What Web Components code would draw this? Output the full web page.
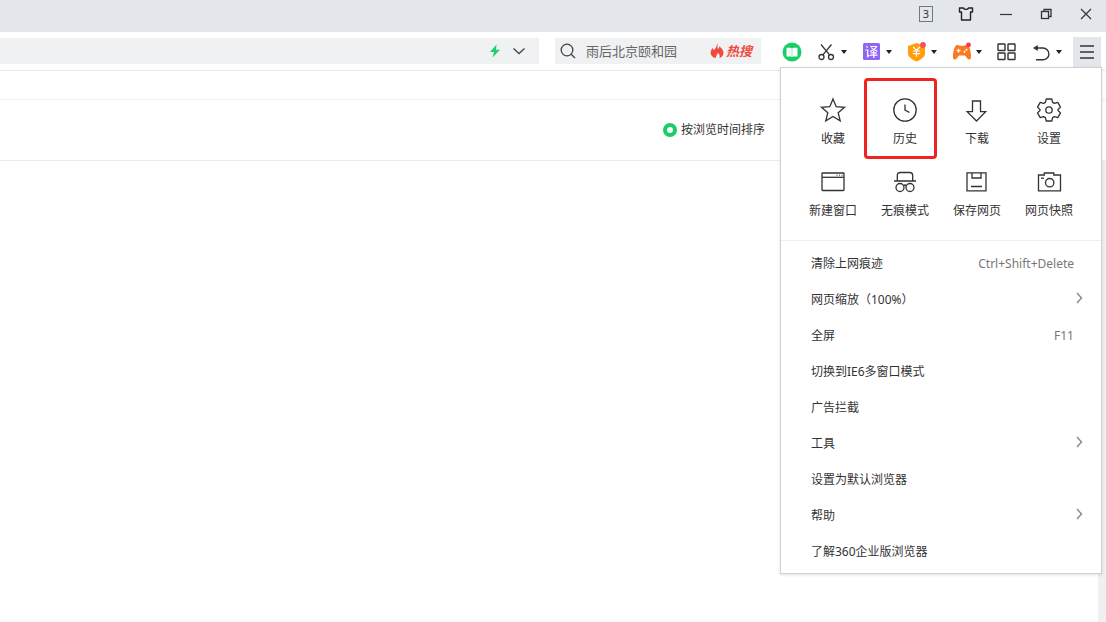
<!DOCTYPE html>
<html lang="zh-CN">
<head>
<meta charset="utf-8">
<meta name="viewport" content="width=device-width, initial-scale=1">
<title>历史记录</title>
<style>
  html, body { margin: 0; min-height: 100%; }
  body {
    font: 12px/16px "Noto Sans", "Noto Sans CJK SC", sans-serif;
    color: #333;
    background: #fff;
  }
</style>
</head>
<body>
<browser-window>
  <title-bar slot="title"></title-bar>
  <tool-bar slot="toolbar">
    <address-field slot="address"></address-field>
    <search-field slot="search" hint="雨后北京颐和园">热搜</search-field>
    <tool-button icon="book" label="阅读"></tool-button>
    <tool-button icon="scissors" label="截图" menu></tool-button>
    <tool-button icon="translate" label="翻译" menu></tool-button>
    <tool-button icon="wallet" label="钱包" menu></tool-button>
    <tool-button icon="game" label="游戏" menu></tool-button>
    <tool-button icon="grid" label="扩展"></tool-button>
    <tool-button icon="undo" label="撤销" menu></tool-button>
    <main-menu slot="menu">
      <menu-tile slot="tiles" icon="star">收藏</menu-tile>
      <menu-tile slot="tiles" icon="clock" marked>历史</menu-tile>
      <menu-tile slot="tiles" icon="download">下载</menu-tile>
      <menu-tile slot="tiles" icon="gear">设置</menu-tile>
      <menu-tile slot="tiles" icon="window">新建窗口</menu-tile>
      <menu-tile slot="tiles" icon="incognito">无痕模式</menu-tile>
      <menu-tile slot="tiles" icon="save">保存网页</menu-tile>
      <menu-tile slot="tiles" icon="camera">网页快照</menu-tile>
      <menu-row>清除上网痕迹<span slot="keys">Ctrl+Shift+Delete</span></menu-row>
      <menu-row submenu>网页缩放（100%）</menu-row>
      <menu-row>全屏<span slot="keys">F11</span></menu-row>
      <menu-row>切换到IE6多窗口模式</menu-row>
      <menu-row>广告拦截</menu-row>
      <menu-row submenu>工具</menu-row>
      <menu-row>设置为默认浏览器</menu-row>
      <menu-row submenu>帮助</menu-row>
      <menu-row>了解360企业版浏览器</menu-row>
    </main-menu>
  </tool-bar>
  <history-page>按浏览时间排序</history-page>
</browser-window>

<script>
const RESET = `
  :host, * { box-sizing: border-box; }
  button { margin: 0; padding: 0; border: 0; background: none; font: inherit; color: inherit; cursor: pointer; }
  input { margin: 0; padding: 0; border: 0; background: none; font: inherit; color: inherit; outline: none; }
`;

function define(name, render) {
  customElements.define(name, class extends HTMLElement {
    connectedCallback() {
      if (this.shadowRoot) return;
      const t = document.createElement('template');
      t.innerHTML = render(this);
      this.attachShadow({ mode: 'open' }).append(t.content.cloneNode(true));
    }
  });
}

/* name: [width, height, markup] */
const ICONS = {
  bolt: [12, 14, '<path d="M7.500.5 1 8h4l-1.500 5.500L11 5.800H7z" fill="#1fce6d"/>'],
  down: [14, 14, '<path d="m1.500 4.500 5.500 5 5.500-5" stroke="#444" stroke-width="1.300"/>'],
  search: [16, 16, '<g stroke="#444" stroke-width="1.300"><circle cx="7" cy="7" r="5.800"/><path d="m11.200 11.200 3.800 3.800"/></g>'],
  flame: [14, 16, '<path d="M7.200 0.500c1 2.500-.4 4 .9 5.600.8-.5 1.100-1.500 1-2.800C12.400 5.600 13.800 8 13.400 10.500 13 13 11.300 14.500 9.500 15c.7-1.800.2-3.800-1.600-5.300C7.600 11.300 6 12 5.700 15 3 14.600.7 12.800.6 9.800.6 7.900 1.700 6.700 2.300 5c.9.600 1.200 1.200 1.300 2.200C5.800 5.600 6.800 3.500 7.200.5z" fill="#f04a3e"/>'],
  book: [20, 20, '<circle cx="10" cy="10" r="9.500" fill="#19cd69"/><path d="M4.500 5.800h4.200L10 6.700l1.300-.9h4.200v8.700h-4.200l-1.300.8-1.300-.8H4.500z" fill="#fff"/><path d="M6 7.200h3v6H6z" fill="#e6faef"/><path d="M10 6.700v8.500" stroke="#8be6b4" stroke-width=".8"/>'],
  scissors: [20, 20, '<g stroke="#333" stroke-width="1.300"><circle cx="4.500" cy="15" r="2.500"/><circle cx="14" cy="15" r="2.500"/><path d="M4 2.500l8.600 10.400M14.500 2.500 5.900 12.900"/></g>'],
  translate: [20, 20, '<rect x="1" y="1" width="17" height="17" rx="1.500" fill="#8f65f3"/><g stroke="#fff" stroke-width="1.200"><path d="m4.300 4.200 1.400 1.500M3.500 8h2.200v6.500l1.700-1.300M8.300 4.500h6.200C13.500 6.800 11.300 8.500 8 9.300M9.300 5.500c1.200 1.700 3 3 6 3.700M8.700 10.800h6.200M8 13.200h7.500M11.800 9v7"/></g>'],
  wallet: [20, 20, '<path d="m9.500 1 8.500 3v7.500c0 3.500-4 6-8.500 8-4.500-2-8.500-4.500-8.500-8V4z" fill="#ff9d0a"/><path d="m6.200 5 3.300 3.500L12.800 5M5.800 9h7.400M5.800 11.700h7.400M9.500 8.500v6.300" stroke="#fff" stroke-width="1.200"/><circle cx="16" cy="3" r="2.900" fill="#fb5057"/>'],
  game: [20, 20, '<path d="M4 3.500c1.700-1 2.700 0 4 .2h4c1.500-.2 2.600-1.200 4-.2 2 1.500 3.500 9.500 2.900 12.500-.4 2-2.300 2-3.600.5-1.200-1.500-1.500-3-3-3H7.700c-1.500 0-1.800 1.500-3 3-1.300 1.500-3.200 1.500-3.600-.5C.5 13 2 5 4 3.500z" fill="#fa7a22"/><path d="M4.500 8.700h4M6.500 6.700v4" stroke="#fff" stroke-width="1.300"/><circle cx="12.500" cy="9.700" r="1" fill="#fff"/><circle cx="14.500" cy="7.700" r="1" fill="#fff"/><circle cx="16.500" cy="2.900" r="2.400" fill="#fb3650"/>'],
  grid: [20, 20, '<g stroke="#333" stroke-width="1.400"><rect x="1" y="2" width="7" height="6.500" rx=".5"/><rect x="11" y="2" width="7" height="6.500" rx=".5"/><rect x="1" y="11" width="7" height="6.500" rx=".5"/><rect x="11" y="11" width="7" height="6.500" rx=".5"/></g>'],
  undo: [20, 20, '<path d="M3 6h8a5.800 5.800 0 0 1 0 11.800H4" stroke="#333" stroke-width="1.400"/><path d="M1 6 5.800 3v6z" fill="#333"/>'],
  caret: [6, 4, '<path d="M0 0h6L3 4z" fill="#222"/>'],
  lines: [16, 16, '<path d="M1 2h14M1 8h14M1 14h14" stroke="#333" stroke-width="1.300"/>'],
  shirt: [16, 16, '<path d="M1.500 2h4c.5 1.800 4.500 1.800 5 0h4v4h-2v8h-9V6h-2z" stroke="#222" stroke-width="1.400" stroke-linejoin="round"/>'],
  minimize: [14, 14, '<path d="M1 7.500h12" stroke="#333" stroke-width="1.200"/>'],
  restore: [12, 12, '<g stroke="#333" stroke-width="1.300"><rect x="1.500" y="3.500" width="7" height="7"/><path d="M4 3.500v-2h7v7H8.500"/></g>'],
  close: [12, 12, '<path d="m1 1 10 10M11 1 1 11" stroke="#333" stroke-width="1.200"/>'],
  right: [8, 12, '<path d="m2 1 4.500 5L2 11" stroke="#888" stroke-width="1.400"/>'],
  star: [28, 28, '<path d="m14 3 3.200 7.700 8.300.6-6.300 5.400 2 8.100L14 20.400l-7.200 4.400 2-8.100-6.300-5.400 8.300-.6z"/>'],
  clock: [28, 28, '<circle cx="14" cy="14" r="11.200"/><path d="M14 8.500V14l4.500 2.500"/>'],
  download: [28, 28, '<path d="M9.500 5h8v10.700h5.200L13.500 25l-9.300-9.300h5.300z"/>'],
  gear: [28, 28, '<path d="M11.200 3h5.600l.8 3.400 1.800 1 3.400-1 2.700 4.700-2.500 2.400v1l2.500 2.400-2.700 4.700-3.400-1-1.800 1-.8 3.400h-5.600l-.8-3.400-1.800-1-3.400 1-2.700-4.700L5 14.500v-1l-2.500-2.400 2.700-4.700 3.400 1 1.800-1z" stroke-linejoin="round"/><circle cx="14" cy="14" r="3.200"/>'],
  window: [28, 28, '<rect x="3" y="5" width="22" height="17.500" rx=".5"/><path d="M3 9.300h22"/><path d="M17.500 7.200h1M20 7.200h1M22.500 7.200h1" stroke-width="1"/>'],
  incognito: [28, 28, '<path d="M3 13h22M6.300 13V7.500q0-3 3-3h9.400q3 0 3 3V13"/><circle cx="9" cy="19.500" r="4"/><circle cx="19" cy="19.500" r="4"/><path d="M12.500 17.500q1.500-1 3 0"/>'],
  save: [28, 28, '<path d="M4 4.800h19v18H4zM9 4.800V10h9V4.800M8 18.500h11"/>'],
  camera: [28, 28, '<path d="M3.500 7h5.800V5h9.500v2h6.700v15.800h-22z"/><circle cx="14.700" cy="14.700" r="4.200"/><path d="M6 10.200h3"/>'],
};

define('ui-icon', el => {
  const [w, h, body] = ICONS[el.getAttribute('name')];
  return `<style>
    :host { display: block; flex: none; }
    svg { display: block; }
  </style>
  <svg width="${w}" height="${h}" viewBox="0 0 ${w} ${h}" fill="none" stroke-width="1.300" aria-hidden="true"
    ${w === 28 ? 'stroke="#333"' : ''}>${body}</svg>`;
});

define('browser-window', () => `<style>
    :host { display: flex; flex-direction: column; min-height: 100vh; }
  </style>
  <slot name="title"></slot><slot name="toolbar"></slot><slot></slot>`);

define('title-bar', () => `<style>${RESET}
    :host { display: flex; justify-content: flex-end; height: 32px; background: #e3e6eb; }
    button { display: flex; align-items: center; justify-content: center; width: 40px; height: 28px; }
    .count { width: 14px; height: 16px; border: 1px solid #777; font-size: 11px; line-height: 14px; text-align: center; }
  </style>
  <button aria-label="标签页"><span class="count">3</span></button>
  <button aria-label="皮肤"><ui-icon name="shirt"></ui-icon></button>
  <button aria-label="最小化"><ui-icon name="minimize"></ui-icon></button>
  <button aria-label="还原"><ui-icon name="restore"></ui-icon></button>
  <button aria-label="关闭"><ui-icon name="close"></ui-icon></button>`);

define('tool-bar', () => `<style>${RESET}
    :host { display: flex; align-items: center; height: 39px; padding: 5px 5px 3px 0; border-bottom: 1px solid #e9e9ea; }
    .address { flex: 1; min-width: 0; padding-right: 16px; }
    .search { width: 227px; padding-right: 21px; }
    .address, .search { align-self: flex-start; padding-top: 1px; }
    .tools { display: flex; align-items: center; gap: 15px; padding-right: 11px; }
  </style>
  <div class="address"><slot name="address"></slot></div>
  <div class="search"><slot name="search"></slot></div>
  <div class="tools"><slot></slot></div>
  <slot name="menu"></slot>`);

define('address-field', () => `<style>${RESET}
    :host { display: flex; align-items: center; gap: 11px; height: 26px; padding: 0 13px 0 8px; background: #eff1f3; }
    input { flex: 1; min-width: 0; height: 24px; }
    button { display: flex; }
  </style>
  <input type="text" aria-label="地址">
  <button aria-label="极速模式"><ui-icon name="bolt"></ui-icon></button>
  <button aria-label="展开地址"><ui-icon name="down"></ui-icon></button>`);

define('search-field', el => `<style>${RESET}
    :host { display: flex; align-items: center; height: 26px; padding: 0 9px 0 5px; background: #eff1f3; }
    input { flex: 1; min-width: 0; height: 24px; margin-left: 10px; font-size: 13px; }
    input::placeholder { color: #666; opacity: 1; }
    a { display: flex; align-items: center; gap: 2px; color: #f04a3e; font-size: 13px; font-style: italic; font-weight: 700; text-decoration: none; }
  </style>
  <ui-icon name="search"></ui-icon>
  <input type="text" aria-label="搜索" placeholder="${el.getAttribute('hint')}">
  <a href="#hot"><ui-icon name="flame"></ui-icon><slot></slot></a>`);

define('tool-button', el => `<style>${RESET}
    :host { display: block; }
    button { display: flex; align-items: center; gap: 4px; }
  </style>
  <button aria-label="${el.getAttribute('label')}">
    <ui-icon name="${el.getAttribute('icon')}"></ui-icon>
    ${el.hasAttribute('menu') ? '<ui-icon name="caret"></ui-icon>' : ''}
  </button>`);

define('main-menu', () => `<style>${RESET}
    :host { display: block; position: relative; }
    .toggle { display: flex; align-items: center; justify-content: center; width: 28px; height: 30px; background: #e3e6eb; }
    .panel { position: absolute; z-index: 2; top: 100%; right: -1px; width: 322px; border: 1px solid #cfd1d4; background: #fff; box-shadow: 0 1px 3px rgba(0, 0, 0, .12); }
    .tiles { display: grid; grid-template-columns: repeat(4, 1fr); padding: 20px 16px 8px; border-bottom: 1px solid #eee; }
    .rows { padding: 4px 0; }
  </style>
  <button class="toggle" aria-label="菜单" aria-expanded="true"><ui-icon name="lines"></ui-icon></button>
  <div class="panel">
    <div class="tiles"><slot name="tiles"></slot></div>
    <div class="rows"><slot></slot></div>
  </div>`);

define('menu-tile', el => `<style>${RESET}
    :host { display: block; position: relative; }
    button { display: flex; flex-direction: column; align-items: center; gap: 7px; width: 100%; height: 72px; padding-top: 8px; white-space: nowrap; }
    :host([marked])::after { content: ""; position: absolute; inset: -10px 4px 1px -5px; border: 3px solid #ee2420; border-radius: 4px; pointer-events: none; }
  </style>
  <button><ui-icon name="${el.getAttribute('icon')}"></ui-icon><span><slot></slot></span></button>`);

define('menu-row', el => `<style>${RESET}
    :host { display: block; }
    button { display: flex; align-items: center; justify-content: space-between; width: 100%; height: 36px; padding: 2px 27px 0 30px; text-align: left; }
    :host([submenu]) button { padding-right: 18px; }
    .keys { color: #777; }
    ui-icon { padding-bottom: 4px; }
  </style>
  <button><span><slot></slot></span>${el.hasAttribute('submenu')
    ? '<ui-icon name="right"></ui-icon>'
    : '<span class="keys"><slot name="keys"></slot></span>'}</button>`);

define('history-page', () => `<style>${RESET}
    :host { display: flex; flex-direction: column; flex: 1; }
    .strip { height: 29px; border-bottom: 1px solid #f1f1f1; }
    .sort { display: flex; align-items: center; justify-content: flex-end; height: 61px; padding-right: 341px; border-bottom: 1px solid #ebebeb; }
    label { display: flex; align-items: center; gap: 4px; }
    input { appearance: none; width: 14px; height: 14px; border: 4px solid #19cd69; border-radius: 50%; background: #fff; }
    .list { display: flex; flex: 1; justify-content: flex-end; }
    .track { width: 8px; background: #f0f0f1; }
  </style>
  <div class="strip"></div>
  <div class="sort"><label><input type="radio" name="sort" checked><span><slot></slot></span></label></div>
  <div class="list"><div class="track"></div></div>`);
</script>
</body>
</html>
